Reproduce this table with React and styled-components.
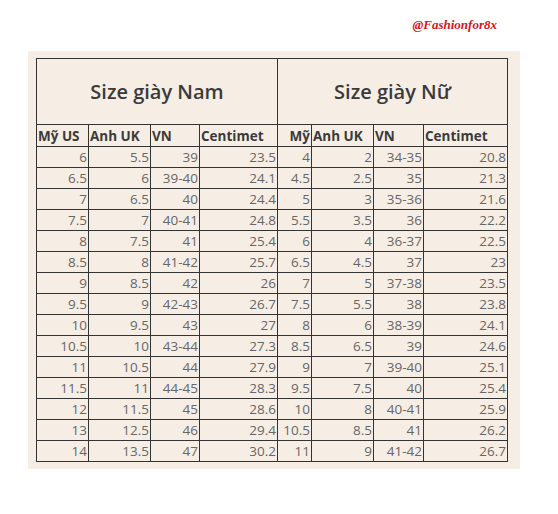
import React from 'react';
import styled, { createGlobalStyle } from 'styled-components';

const GlobalStyle = createGlobalStyle`
  body {
    margin: 0;
    background: #ffffff;
    font-family: "Open Sans", "Liberation Sans", sans-serif;
  }
`;

const Page = styled.div`
  width: 558px;
  height: 514px;
  display: flex;
  flex-direction: column;
`;

const TopBar = styled.div`
  height: 51px;
  display: flex;
  justify-content: flex-end;
  padding: 17px 61px 0 0;
  box-sizing: border-box;
`;

const Mark = styled.span`
  font-family: "Liberation Serif", serif;
  font-style: italic;
  font-weight: bold;
  font-size: 13px;
  color: #d8141b;
`;

const Panel = styled.div`
  margin-left: 28px;
  width: 492px;
  padding: 7px 13px 7px 8px;
  box-sizing: border-box;
  background: #f6eee5;
`;

const Table = styled.table`
  border-collapse: collapse;
  table-layout: fixed;
  width: 471px;
  color: #333;
`;

const Title = styled.th`
  height: 65px;
  border: 1px solid #333;
  font-size: 20px;
  font-weight: 600;
  color: #3a3a3a;
  padding: 0;
`;

const Head = styled.th`
  height: 21px;
  border: 1px solid #333;
  font-size: 13.5px;
  font-weight: 700;
  color: #3a3a3a;
  text-align: ${p => (p.$right ? 'right' : 'left')};
  padding: 0 1px;
  white-space: nowrap;
  overflow: hidden;
`;

const Cell = styled.td`
  height: 20px;
  border: 1px solid #333;
  font-size: 13.5px;
  color: #666;
  text-align: right;
  padding: 0 1px 0 0;
  white-space: nowrap;
  line-height: 20px;
`;

const men = [
  ['6', '5.5', '39', '23.5'],
  ['6.5', '6', '39-40', '24.1'],
  ['7', '6.5', '40', '24.4'],
  ['7.5', '7', '40-41', '24.8'],
  ['8', '7.5', '41', '25.4'],
  ['8.5', '8', '41-42', '25.7'],
  ['9', '8.5', '42', '26'],
  ['9.5', '9', '42-43', '26.7'],
  ['10', '9.5', '43', '27'],
  ['10.5', '10', '43-44', '27.3'],
  ['11', '10.5', '44', '27.9'],
  ['11.5', '11', '44-45', '28.3'],
  ['12', '11.5', '45', '28.6'],
  ['13', '12.5', '46', '29.4'],
  ['14', '13.5', '47', '30.2'],
];

const women = [
  ['4', '2', '34-35', '20.8'],
  ['4.5', '2.5', '35', '21.3'],
  ['5', '3', '35-36', '21.6'],
  ['5.5', '3.5', '36', '22.2'],
  ['6', '4', '36-37', '22.5'],
  ['6.5', '4.5', '37', '23'],
  ['7', '5', '37-38', '23.5'],
  ['7.5', '5.5', '38', '23.8'],
  ['8', '6', '38-39', '24.1'],
  ['8.5', '6.5', '39', '24.6'],
  ['9', '7', '39-40', '25.1'],
  ['9.5', '7.5', '40', '25.4'],
  ['10', '8', '40-41', '25.9'],
  ['10.5', '8.5', '41', '26.2'],
  ['11', '9', '41-42', '26.7'],
];

const widths = [52, 62, 49, 78, 34, 62, 50, 84];

export default function App() {
  return (
    <Page>
      <GlobalStyle />
      <TopBar>
        <Mark>@Fashionfor8x</Mark>
      </TopBar>
      <Panel>
        <Table>
          <colgroup>
            {widths.map((w, i) => <col key={i} style={{ width: w }} />)}
          </colgroup>
          <thead>
            <tr>
              <Title colSpan={4}>Size giày Nam</Title>
              <Title colSpan={4}>Size giày Nữ</Title>
            </tr>
            <tr>
              <Head>Mỹ US</Head>
              <Head>Anh UK</Head>
              <Head>VN</Head>
              <Head>Centimet</Head>
              <Head $right>Mỹ</Head>
              <Head>Anh UK</Head>
              <Head>VN</Head>
              <Head>Centimet</Head>
            </tr>
          </thead>
          <tbody>
            {men.map((row, i) => (
              <tr key={i}>
                {row.concat(women[i]).map((v, j) => <Cell key={j}>{v}</Cell>)}
              </tr>
            ))}
          </tbody>
        </Table>
      </Panel>
    </Page>
  );
}
